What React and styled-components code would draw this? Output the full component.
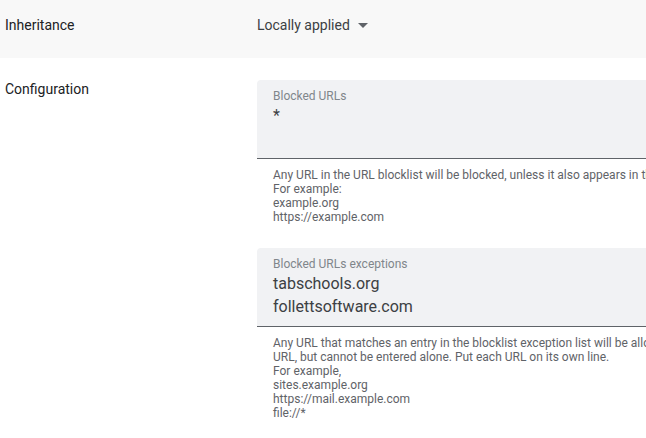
import styled, { createGlobalStyle } from "styled-components";

const GlobalStyle = createGlobalStyle`
  body {
    margin: 0;
    overflow: hidden;
    font-family: Roboto, "Liberation Sans", sans-serif;
    color: #202124;
    background: #fff;
  }
`;

const Page = styled.div`
  width: 1000px;
`;

const Row = styled.div`
  display: grid;
  grid-template-columns: 257px 1fr;
  align-items: ${(p) => (p.top ? "start" : "center")};
  background: ${(p) => (p.shaded ? "#f8f8f8" : "#fff")};
  min-height: ${(p) => (p.shaded ? "58px" : "auto")};
  padding-top: ${(p) => (p.top ? "22px" : "0")};
`;

const RowLabel = styled.div`
  padding-left: 5px;
  font-size: 14px;
  line-height: 20px;
  color: #202124;
  margin-top: ${(p) => p.shift || 0}px;
`;

const Config = styled.div`
  font-size: 14px;
  margin-top: -8px;
  display: flex;
  align-items: center;
  color: #3c4043;
  line-height: 20px;
`;

const Caret = styled.span`
  width: 0;
  height: 0;
  margin-left: 8px;
  border-left: 5px solid transparent;
  border-right: 5px solid transparent;
  border-top: 5px solid #5f6368;
`;

const Fields = styled.div`
  display: flex;
  flex-direction: column;
  gap: 24px;
`;

const Field = styled.div`
  width: 720px;
`;

const Box = styled.div`
  box-sizing: border-box;
  min-height: ${(p) => p.minHeight || 0}px;
  background: #f1f2f4;
  border-radius: 4px 4px 0 0;
  border-bottom: 1px solid #5f6368;
  padding: 8px 16px 8px;
`;

const FieldLabel = styled.div`
  font-size: 12px;
  line-height: 16px;
  color: #80868b;
`;

const Value = styled.div`
  font-size: 16px;
  line-height: 23px;
  color: #3c4043;
`;

const Helper = styled.div`
  padding: 9px 16px 0;
  font-size: 12px;
  line-height: 14px;
  color: #5f6368;
  white-space: pre;
`;

const fields = [
  {
    label: "Blocked URLs",
    values: ["*"],
    minHeight: 79,
    help: [
      "Any URL in the URL blocklist will be blocked, unless it also appears in the URL blocklist exception list. Maximum 1000 URLs.",
      "For example:",
      "example.org",
      "https://example.com",
    ],
  },
  {
    label: "Blocked URLs exceptions",
    values: ["tabschools.org", "follettsoftware.com"],
    minHeight: 79,
    help: [
      "Any URL that matches an entry in the blocklist exception list will be allowed, even if it matches an entry in the URL blocklist. Wildcards (\"*\") are allowed when appended to a",
      "URL, but cannot be entered alone. Put each URL on its own line.",
      "For example,",
      "sites.example.org",
      "https://mail.example.com",
      "file://*",
    ],
  },
];

const App = () => {
  return (
    <>
      <GlobalStyle />
      <Page>
        <Row shaded>
          <RowLabel shift={-8}>Inheritance</RowLabel>
          <Config>
            Locally applied
            <Caret />
          </Config>
        </Row>
        <Row top>
          <RowLabel shift={-1}>Configuration</RowLabel>
          <Fields>
            {fields.map((f, i) => (
              <Field key={i}>
                <Box minHeight={f.minHeight}>
                  <FieldLabel>{f.label}</FieldLabel>
                  {f.values.map((v, j) => (
                    <Value key={j}>{v}</Value>
                  ))}
                </Box>
                <Helper>{f.help.join("\n")}</Helper>
              </Field>
            ))}
          </Fields>
        </Row>
      </Page>
    </>
  );
};

export default App;
